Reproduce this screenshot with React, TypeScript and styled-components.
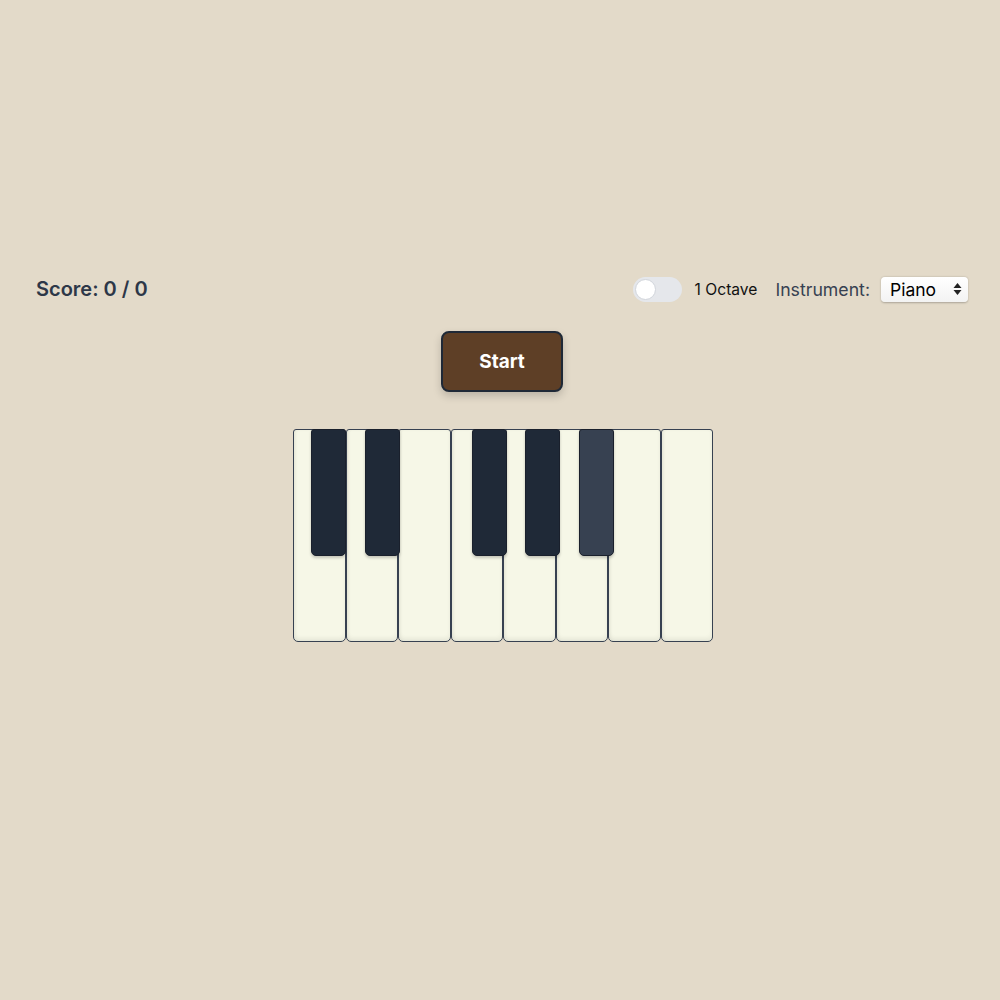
import React from "react";
import styled, { createGlobalStyle } from "styled-components";

const Global = createGlobalStyle`
  html, body { margin: 0; padding: 0; background: #e3dac9; }
  body { font-family: Inter, "Noto Sans", "Liberation Sans", sans-serif; }
`;

const Page = styled.div`
  min-height: 1000px;
  box-sizing: border-box;
  padding: 276px 32px 0 36px;
  display: flex;
  flex-direction: column;
`;

const Header = styled.div`
  display: flex;
  align-items: center;
  justify-content: space-between;
  height: 26px;
`;

const Score = styled.div`
  font-size: 20px;
  font-weight: 600;
  color: #2d3748;
`;

const Controls = styled.div`
  display: flex;
  align-items: center;
`;

const Toggle = styled.div`
  width: 49px;
  height: 25px;
  border-radius: 13px;
  background: #e5e7eb;
  box-sizing: border-box;
  padding: 2px;
  display: flex;
  align-items: center;
`;

const Knob = styled.div`
  width: 21px;
  height: 21px;
  border-radius: 50%;
  background: #ffffff;
  border: 1px solid #d1d5db;
  box-sizing: border-box;
`;

const OctaveLabel = styled.span`
  font-size: 15.6px;
  color: #111;
  margin-left: 13px;
`;

const InstLabel = styled.span`
  font-size: 17.7px;
  color: #374151;
  margin-left: 18px;
`;

const Select = styled.div`
  margin-left: 11px;
  width: 87px;
  height: 25px;
  box-sizing: border-box;
  border-radius: 4px;
  background: linear-gradient(#ffffff, #f3f3f3);
  box-shadow: 0 0.5px 2px rgba(0,0,0,0.25);
  display: flex;
  align-items: center;
  justify-content: space-between;
  padding: 0 6px 0 9px;
  font-size: 17.5px;
  color: #000;
`;

const StartRow = styled.div`
  display: flex;
  justify-content: center;
  margin-top: 29px;
`;

const StartButton = styled.button`
  width: 122px;
  height: 61px;
  background: #5e3f26;
  border: 2px solid #1f2937;
  border-radius: 8px;
  color: #fff;
  font-family: Inter, "Noto Sans", sans-serif;
  font-size: 19px;
  font-weight: 700;
  box-shadow: 0 4px 8px rgba(0,0,0,0.18);
  cursor: pointer;
`;

const PianoRow = styled.div`
  display: flex;
  justify-content: center;
  margin-top: 37px;
  padding-left: 2px;
`;

const Piano = styled.div`
  position: relative;
  display: flex;
  width: 420px;
  height: 213px;
`;

const WhiteKey = styled.div`
  width: 52.5px;
  height: 213px;
  box-sizing: border-box;
  background: #f6f7e7;
  border: 1.5px solid #374151;
  border-radius: 3px 3px 5px 5px;
  box-shadow: inset 0 -3px 4px rgba(0,0,0,0.06), inset 2px 0 3px rgba(0,0,0,0.04);
`;

const BlackKey = styled.div<{ $active?: boolean }>`
  position: absolute;
  top: 0;
  width: 35px;
  height: 127px;
  box-sizing: border-box;
  background: ${(p) => (p.$active ? "#374151" : "#1f2937")};
  border: 1px solid #1a202c;
  border-radius: 3px 3px 5px 5px;
  box-shadow: 0 2px 3px rgba(0,0,0,0.2);
`;

const blackPositions = [18, 71.5, 178.5, 232, 285.5];

export default function App() {
  return (
    <>
      <Global />
      <Page>
        <Header>
          <Score>Score: 0 / 0</Score>
          <Controls>
            <Toggle>
              <Knob />
            </Toggle>
            <OctaveLabel>1 Octave</OctaveLabel>
            <InstLabel>Instrument:</InstLabel>
            <Select>
              <span>Piano</span>
              <svg width="9" height="14" viewBox="0 0 9 14">
                <path d="M4.5 1 L8.5 6 L0.5 6 Z" fill="#222" />
                <path d="M4.5 13 L8.5 8 L0.5 8 Z" fill="#222" />
              </svg>
            </Select>
          </Controls>
        </Header>
        <StartRow>
          <StartButton>Start</StartButton>
        </StartRow>
        <PianoRow>
          <Piano>
            {Array.from({ length: 8 }).map((_, i) => (
              <WhiteKey key={i} />
            ))}
            {blackPositions.map((left, i) => (
              <BlackKey key={i} $active={i === 4} style={{ left }} />
            ))}
          </Piano>
        </PianoRow>
      </Page>
    </>
  );
}
